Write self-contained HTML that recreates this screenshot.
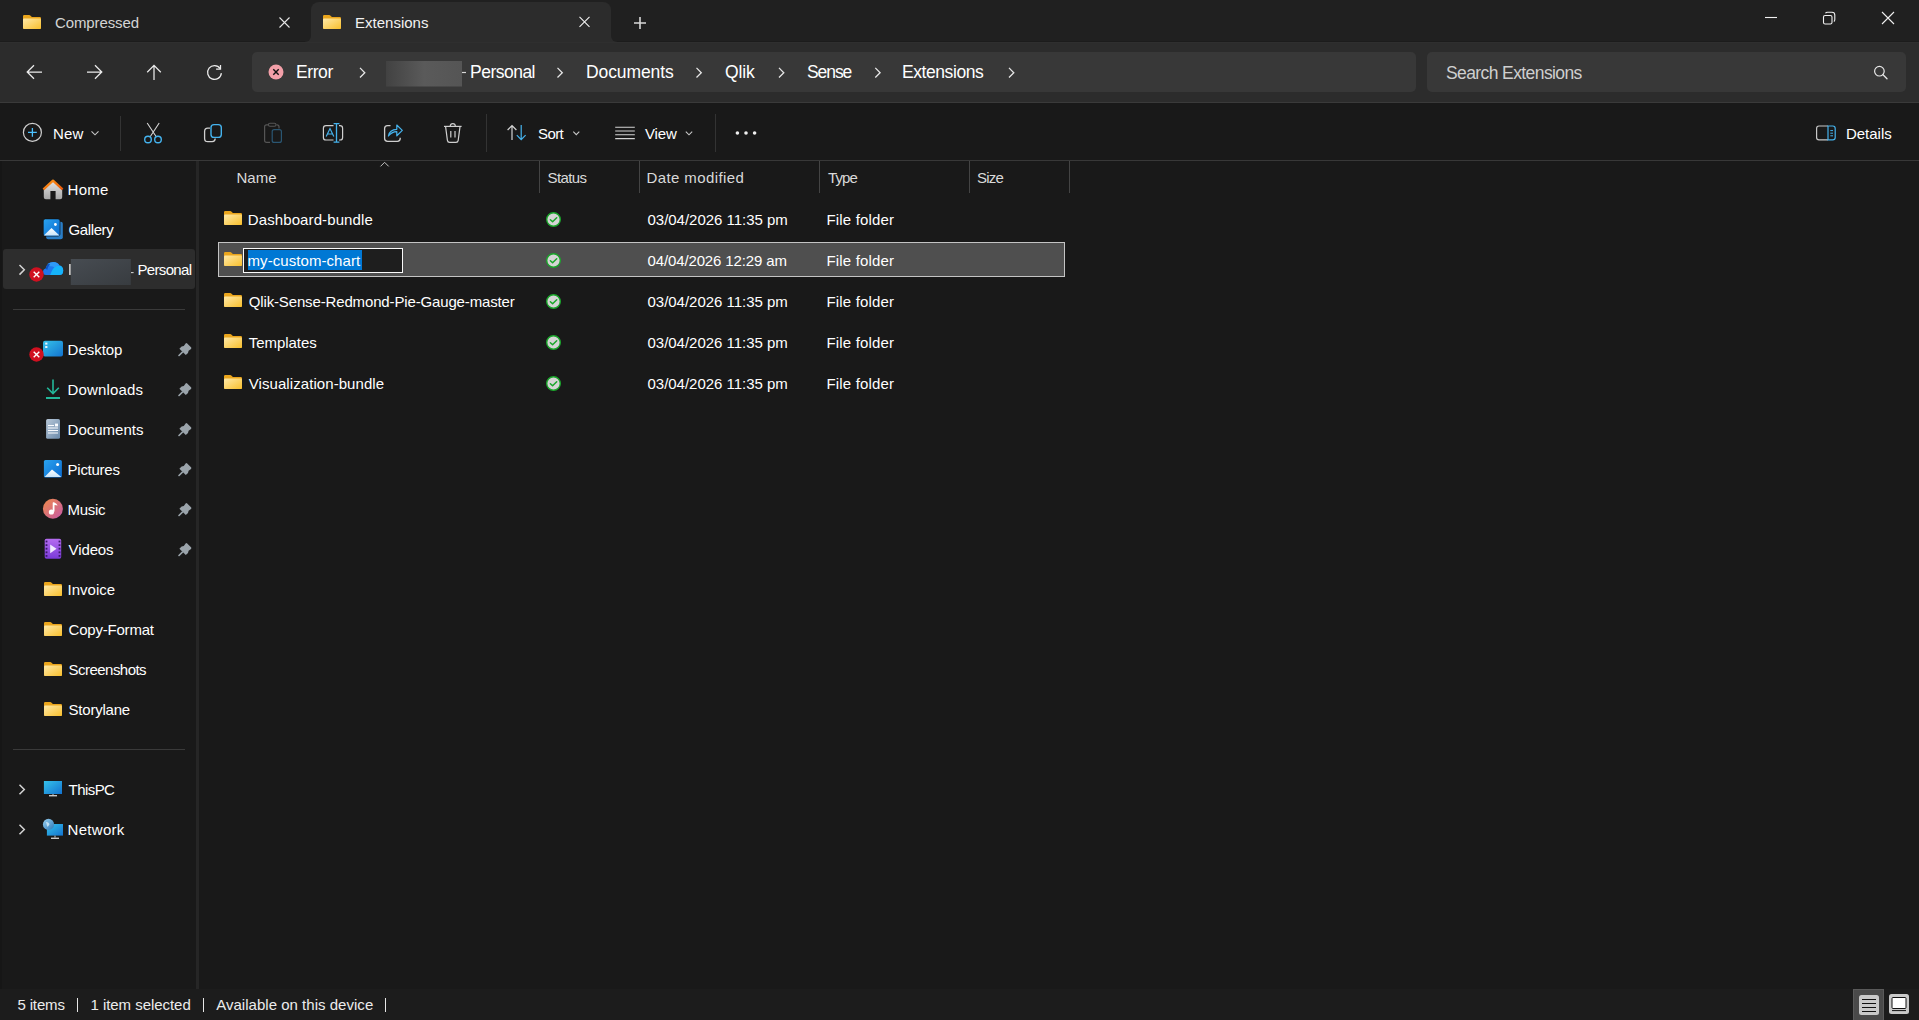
<!DOCTYPE html>
<html><head><meta charset="utf-8">
<style>
*{box-sizing:border-box;margin:0;padding:0}
html,body{width:1919px;height:1020px;overflow:hidden;background:#191919;font-family:"Liberation Sans",sans-serif;color:#fff}
.a{position:absolute}
.t{position:absolute;white-space:pre}
#ic{position:absolute;left:0;top:0;width:1919px;height:1020px}

</style></head><body>
<div class="a" style="left:0;top:0;width:1919px;height:42px;background:#202020"></div>
<div class="a" style="left:0;top:20px;width:1919px;height:83px;background:#2c2c2c"></div>
<div class="a" style="left:0;top:0;width:311px;height:42px;background:#202020;border-bottom-right-radius:6px"></div>
<div class="a" style="left:611px;top:0;width:1308px;height:42px;background:#202020;border-bottom-left-radius:6px"></div>
<div class="a" style="left:311px;top:2px;width:300px;height:30px;background:#2c2c2c;border-radius:8px 8px 0 0"></div>
<div class="a" style="left:0;top:41px;width:305px;height:1px;background:#1c1c1c"></div>
<div class="a" style="left:617px;top:41px;width:1302px;height:1px;background:#1c1c1c"></div>
<div class="a" style="left:0;top:42px;width:1919px;height:1px;background:#2f2f2f"></div>
<div class="a" style="left:252px;top:52px;width:1164px;height:40px;background:#383838;border-radius:5px"></div>
<div class="a" style="left:1427px;top:52px;width:479px;height:40px;background:#383838;border-radius:5px"></div>
<div class="a" style="left:0;top:102px;width:1919px;height:1px;background:#3a3a3a"></div>
<div class="a" style="left:0;top:103px;width:1919px;height:57px;background:#191919"></div>
<div class="a" style="left:0;top:160px;width:1919px;height:1px;background:#383838"></div>
<div class="a" style="left:0;top:161px;width:2px;height:828px;background:#161616"></div>
<div class="a" style="left:196px;top:161px;width:3px;height:828px;background:#262626"></div>
<div class="a" style="left:0;top:989px;width:1919px;height:31px;background:#1c1c1c"></div>
<div class="a" style="left:3px;top:249px;width:192px;height:40px;background:#2d2d2d;border-radius:3px"></div>
<div class="a" style="left:13px;top:309px;width:172px;height:1px;background:#3a3a3a"></div>
<div class="a" style="left:13px;top:749px;width:172px;height:1px;background:#3a3a3a"></div>
<div class="a" style="left:218px;top:242px;width:847px;height:35px;background:#4f4f4f;border:1px solid #c4c4c4"></div>
<div class="a" style="left:243px;top:248px;width:160px;height:25px;background:#1e1e1e;border:1px solid #fafafa"></div>
<div class="a" style="left:248px;top:250px;width:114px;height:20px;background:#0078d4"></div>

<svg id="ic" width="1919" height="1020" viewBox="0 0 1919 1020">
<defs>
<linearGradient id="fg" x1="0" y1="0" x2="1" y2="1"><stop offset="0" stop-color="#ffe9a8"/><stop offset="1" stop-color="#f8bf2c"/></linearGradient>
<symbol id="folder" viewBox="0 0 18 14" overflow="visible">
<path d="M0 1.2 Q0 0 1.2 0 H6.3 Q6.9 0 7.3 0.4 L8.9 2 H16.8 Q18 2 18 3.2 V12.8 Q18 14 16.8 14 H1.2 Q0 14 0 12.8 Z" fill="#eaa51c"/>
<path d="M0 4.6 Q0 3.6 1 3.6 H17 Q18 3.6 18 4.6 V12.8 Q18 14 16.8 14 H1.2 Q0 14 0 12.8 Z" fill="url(#fg)"/>
</symbol>
<symbol id="check" viewBox="0 0 15 15" overflow="visible">
<circle cx="7.5" cy="7.5" r="6.8" fill="#d5d5d5" stroke="#19a62a" stroke-width="1.4"/>
<path d="M4.4 7.7 L6.6 9.8 L10.7 5.8" fill="none" stroke="#19a62a" stroke-width="1.5" stroke-linecap="round" stroke-linejoin="round"/>
</symbol>
<symbol id="pin" viewBox="0 0 14 14" overflow="visible">
<path d="M7.6 1 Q8.4 0.2 9.2 1 L13 4.8 Q13.8 5.6 13 6.4 L10.6 8.2 L10 10.4 L7.8 12.6 L1.4 6.2 L3.6 4 L5.8 3.4 Z" fill="#9ba4ab"/>
<path d="M4.4 9.6 L1 13" stroke="#9ba4ab" stroke-width="1.6" stroke-linecap="round"/>
</symbol>
<symbol id="redx" viewBox="0 0 15 15" overflow="visible">
<circle cx="7.5" cy="7.5" r="7.2" fill="#d01020"/>
<path d="M4.7 4.7 L10.3 10.3 M10.3 4.7 L4.7 10.3" stroke="#fff" stroke-width="1.4"/>
</symbol>
<symbol id="chev" viewBox="0 0 7 11" overflow="visible">
<path d="M1 0.7 L5.8 5.5 L1 10.3" fill="none" stroke="currentColor"/>
</symbol>
<symbol id="fold2" viewBox="0 0 18 14" overflow="visible">
<path d="M0 1.2 Q0 0 1.2 0 H6.3 Q6.9 0 7.3 0.4 L8.9 2 H16.8 Q18 2 18 3.2 V12.8 Q18 14 16.8 14 H1.2 Q0 14 0 12.8 Z" fill="#eaa51c"/>
<path d="M0 4.6 Q0 3.6 1 3.6 H17 Q18 3.6 18 4.6 V12.8 Q18 14 16.8 14 H1.2 Q0 14 0 12.8 Z" fill="url(#fg)"/>
</symbol>
<linearGradient id="blur1" x1="0" y1="0" x2="1" y2="0"><stop offset="0" stop-color="#424242"/><stop offset="0.5" stop-color="#5a5a5a"/><stop offset="1" stop-color="#555"/></linearGradient>
<linearGradient id="blur2" x1="0" y1="0" x2="1" y2="1"><stop offset="0" stop-color="#474c52"/><stop offset="1" stop-color="#383c40"/></linearGradient>
<linearGradient id="home" x1="0" y1="0" x2="0" y2="1"><stop offset="0" stop-color="#e4e4e4"/><stop offset="1" stop-color="#a8a8a8"/></linearGradient>
<linearGradient id="roof" x1="0" y1="0" x2="1" y2="1"><stop offset="0" stop-color="#ff9a1a"/><stop offset="1" stop-color="#e8560a"/></linearGradient>
<linearGradient id="bluepic" x1="0" y1="0" x2="1" y2="1"><stop offset="0" stop-color="#2aa3ef"/><stop offset="1" stop-color="#0a6ad0"/></linearGradient>
<linearGradient id="mount" x1="0" y1="0" x2="0" y2="1"><stop offset="0" stop-color="#ffffff"/><stop offset="1" stop-color="#c8e4fa"/></linearGradient>
<linearGradient id="cloud" x1="0" y1="0" x2="1" y2="1"><stop offset="0" stop-color="#3ac6ff"/><stop offset="1" stop-color="#0c7ae0"/></linearGradient>
<linearGradient id="desk" x1="0" y1="0" x2="1" y2="1"><stop offset="0" stop-color="#35c2ea"/><stop offset="1" stop-color="#1373d0"/></linearGradient>
<linearGradient id="doc" x1="0" y1="0" x2="1" y2="1"><stop offset="0" stop-color="#b8c8d8"/><stop offset="1" stop-color="#6a8aab"/></linearGradient>
<linearGradient id="music" x1="0" y1="0" x2="1" y2="1"><stop offset="0" stop-color="#f08a48"/><stop offset="1" stop-color="#c458a8"/></linearGradient>
<linearGradient id="video" x1="0" y1="0" x2="0" y2="1"><stop offset="0" stop-color="#b56cf0"/><stop offset="1" stop-color="#7a3ad8"/></linearGradient>
<linearGradient id="globe" x1="0" y1="0" x2="1" y2="1"><stop offset="0" stop-color="#9ad0f0"/><stop offset="1" stop-color="#2a78b8"/></linearGradient>
</defs>

<!-- tab strip -->
<use href="#folder" x="23" y="15" width="18" height="14"/>
<use href="#folder" x="323" y="15" width="18" height="14"/>
<path d="M279.5 17.5 L289.5 27.5 M289.5 17.5 L279.5 27.5" stroke="#e6e6e6" stroke-width="1.1"/>
<path d="M579.5 16.8 L589.5 26.8 M589.5 16.8 L579.5 26.8" stroke="#f0f0f0" stroke-width="1.1"/>
<path d="M634 23 H646 M640 17 V29" stroke="#d8d8d8" stroke-width="1.6"/>
<path d="M1765 17.5 H1777" stroke="#f0f0f0" stroke-width="1.1"/>
<rect x="1823.5" y="15.5" width="8.5" height="8.5" rx="1.6" fill="none" stroke="#f0f0f0" stroke-width="1.1"/>
<path d="M1825.5 13.2 Q1826 12.2 1827.5 12.2 H1832 Q1834.8 12.2 1834.8 15 V19.5 Q1834.8 21 1833.8 21.5" fill="none" stroke="#f0f0f0" stroke-width="1.1"/>
<path d="M1882 12 L1894 24 M1894 12 L1882 24" stroke="#f0f0f0" stroke-width="1.1"/>

<!-- nav buttons -->
<g fill="none" stroke="#ececec" stroke-width="1.25" stroke-linejoin="miter">
<path d="M42 72 H27.5 M34 65.2 L27.2 72 L34 78.8"/>
<path d="M87 72 H101.5 M95 65.2 L101.8 72 L95 78.8"/>
<path d="M154 80 V65.5 M147.2 72.2 L154 65.4 L160.8 72.2"/>
<path d="M220.15 68.54 A6.9 6.9 0 1 0 221.37 73.1"/>
<path d="M220.5 64.9 V69.2 H216.1"/>
</g>

<!-- address box -->
<circle cx="276" cy="72" r="7.5" fill="#f3a0a9"/>
<path d="M273.3 69.3 L278.7 74.7 M278.7 69.3 L273.3 74.7" stroke="#111" stroke-width="1.4"/>
<g color="#e6e6e6" stroke-width="1.3">
<use href="#chev" x="359" y="67.2" width="7" height="11"/>
<use href="#chev" x="556.5" y="67.2" width="7" height="11"/>
<use href="#chev" x="695.5" y="67.2" width="7" height="11"/>
<use href="#chev" x="778" y="67.2" width="7" height="11"/>
<use href="#chev" x="874.3" y="67.2" width="7" height="11"/>
<use href="#chev" x="1008" y="67.2" width="7" height="11"/>
</g>
<rect x="386" y="61" width="76" height="25.5" fill="url(#blur1)"/>
<path d="M462 72.5 H466" stroke="#d8d8d8" stroke-width="1.2"/>
<circle cx="1879.4" cy="71.2" r="4.8" fill="none" stroke="#e8e8e8" stroke-width="1.2"/>
<path d="M1883 74.8 L1887 78.8" stroke="#e8e8e8" stroke-width="1.3" stroke-linecap="round"/>

<!-- toolbar -->
<circle cx="32.4" cy="132.4" r="9" fill="none" stroke="#cfcfcf" stroke-width="1.2"/>
<path d="M28 132.4 H36.8 M32.4 128 V136.8" stroke="#4cc2ff" stroke-width="1.3"/>
<path d="M91.5 131.3 L95 134.8 L98.5 131.3" fill="none" stroke="#c8c8c8" stroke-width="1.1"/>
<rect x="120" y="116" width="1" height="35" fill="#333"/>
<!-- cut -->
<path d="M147.2 123 L156.4 137 M159.2 123 L150 137" stroke="#d4d4d4" stroke-width="1.1"/>
<circle cx="148" cy="139.5" r="3.3" fill="none" stroke="#45b3ee" stroke-width="1.4"/>
<circle cx="158" cy="139.5" r="3.3" fill="none" stroke="#45b3ee" stroke-width="1.4"/>
<!-- copy -->
<path d="M210 128.2 H207.8 Q204.6 128.2 204.6 131.4 V138.4 Q204.6 141.6 207.8 141.6 H212.2 Q215.2 141.6 215.2 138.6" fill="none" stroke="#d0d0d0" stroke-width="1.3"/>
<rect x="211" y="124.6" width="10.3" height="12.8" rx="3" fill="none" stroke="#45b3ee" stroke-width="1.4"/>
<!-- paste (disabled) -->
<path d="M268 124.8 H266.6 Q264.6 124.8 264.6 126.8 V140.6 Q264.6 142.4 266.6 142.4 H270" fill="none" stroke="#555" stroke-width="1.2"/>
<path d="M276.5 124.8 H277 Q279 124.8 279 126.8 V128.5" fill="none" stroke="#555" stroke-width="1.2"/>
<rect x="268.4" y="123.2" width="7.6" height="3" rx="1.5" fill="none" stroke="#555" stroke-width="1.1"/>
<rect x="272.2" y="129.6" width="9.2" height="12.8" rx="2" fill="none" stroke="#2a5672" stroke-width="1.2"/>
<!-- rename -->
<path d="M333.5 125.6 H326 Q323.4 125.6 323.4 128.2 V137.4 Q323.4 140 326 140 H333.5" fill="none" stroke="#cfcfcf" stroke-width="1.2"/>
<path d="M339 125.6 H340 Q342.6 125.6 342.6 128.2 V137.4 Q342.6 140 340 140 H339" fill="none" stroke="#cfcfcf" stroke-width="1.2"/>
<path d="M336.5 123.6 V142.2 M333.6 123.6 H339.4 M333.6 142.2 H339.4" stroke="#45b3ee" stroke-width="1.3"/>
<path d="M326.2 136.6 L330 128.6 L333.8 136.6 M327.4 134 H332.6" fill="none" stroke="#45b3ee" stroke-width="1.2"/>
<!-- share -->
<path d="M390.5 125.6 H387.6 Q384.6 125.6 384.6 128.6 V138.6 Q384.6 141.4 387.6 141.4 H397.4 Q400.2 141.4 400.2 138.6 V137.8" fill="none" stroke="#cfcfcf" stroke-width="1.3"/>
<path d="M388.4 136 Q389.5 129.5 396.8 129.3 V125 L402.3 130.4 L396.8 135.8 V131.6 Q391.5 131.8 388.4 136 Z" fill="none" stroke="#45b3ee" stroke-width="1.2" stroke-linejoin="round"/>
<!-- delete -->
<path d="M444 126.4 H461.6" stroke="#cfcfcf" stroke-width="1.2"/>
<path d="M450.2 126.2 Q450.4 123.6 452.8 123.6 Q455.2 123.6 455.4 126.2" fill="none" stroke="#cfcfcf" stroke-width="1.2"/>
<path d="M445.6 126.6 L447.4 140.4 Q447.7 142.4 449.6 142.4 H456 Q457.9 142.4 458.2 140.4 L460 126.6" fill="none" stroke="#cfcfcf" stroke-width="1.2"/>
<path d="M450.8 131 V137.6 M455 131 V137.6" stroke="#cfcfcf" stroke-width="1.2"/>
<rect x="486" y="114" width="1" height="38" fill="#333"/>
<!-- sort -->
<path d="M512 140 V125.6 M507.6 130 L512 125.6 L516.4 130" fill="none" stroke="#d4d4d4" stroke-width="1.2"/>
<path d="M521.2 125 V139.6 M516.8 135.2 L521.2 139.6 L525.6 135.2" fill="none" stroke="#45b3ee" stroke-width="1.2"/>
<path d="M573.3 131.6 L576.3 134.6 L579.3 131.6" fill="none" stroke="#c8c8c8" stroke-width="1.1"/>
<!-- view -->
<path d="M615.2 127.2 H634.8 M615.2 131 H634.8 M615.2 134.8 H634.8 M615.2 138.6 H634.8" stroke="#d4d4d4" stroke-width="1.1"/>
<path d="M685.8 131.6 L689 134.8 L692.2 131.6" fill="none" stroke="#c8c8c8" stroke-width="1.1"/>
<rect x="715" y="114" width="1" height="38" fill="#333"/>
<circle cx="737.4" cy="133" r="1.8" fill="#f0f0f0"/>
<circle cx="746" cy="133" r="1.8" fill="#f0f0f0"/>
<circle cx="754.6" cy="133" r="1.8" fill="#f0f0f0"/>
<!-- details -->
<path d="M1828 126 H1819 Q1816.6 126 1816.6 128.4 V137.4 Q1816.6 139.8 1819 139.8 H1828" fill="none" stroke="#c8c8c8" stroke-width="1.2"/>
<path d="M1828 126 H1832.8 Q1835.2 126 1835.2 128.4 V137.4 Q1835.2 139.8 1832.8 139.8 H1828 Z" fill="none" stroke="#45b3ee" stroke-width="1.2"/>
<path d="M1830.3 130.6 H1833 M1830.3 133.2 H1833 M1830.3 135.8 H1833" stroke="#45b3ee" stroke-width="1"/>

<!-- header -->
<path d="M380.5 166.4 L384.6 162.3 L388.7 166.4" fill="none" stroke="#c4c4c4" stroke-width="1"/>
<g fill="#444">
<rect x="539" y="161" width="1" height="32"/>
<rect x="639" y="161" width="1" height="32"/>
<rect x="819" y="161" width="1" height="32"/>
<rect x="969" y="161" width="1" height="32"/>
<rect x="1069" y="161" width="1" height="32"/>
</g>

<!-- rows -->
<use href="#folder" x="224" y="211" width="18" height="14"/>
<use href="#folder" x="224" y="252" width="18" height="14"/>
<use href="#folder" x="224" y="293" width="18" height="14"/>
<use href="#folder" x="224" y="334" width="18" height="14"/>
<use href="#folder" x="224" y="375" width="18" height="14"/>
<use href="#check" x="546" y="212" width="15" height="15"/>
<use href="#check" x="546" y="253" width="15" height="15"/>
<use href="#check" x="546" y="294" width="15" height="15"/>
<use href="#check" x="546" y="335" width="15" height="15"/>
<use href="#check" x="546" y="376" width="15" height="15"/>

<!-- nav pane -->
<!-- home -->
<path d="M43.8 189.2 L53 181 L62.2 189.2 V197.2 Q62.2 199.2 60.2 199.2 H55.6 V191 H50.4 V199.2 H45.8 Q43.8 199.2 43.8 197.2 Z" fill="url(#home)"/>
<path d="M43.4 189.4 L53 180.6 L62.6 189.4" fill="none" stroke="url(#roof)" stroke-width="2.3" stroke-linejoin="round"/>
<!-- gallery -->
<rect x="46.2" y="221.8" width="16.6" height="17.4" rx="2" fill="#2d8fe6" opacity="0.85"/>
<rect x="43.3" y="218.9" width="16.7" height="17.2" rx="2" fill="url(#bluepic)" stroke="#0d0d0d" stroke-width="0.6"/>
<path d="M43.8 235.6 L51.5 228 L59.5 235.6 Z" fill="url(#mount)"/>
<circle cx="55.4" cy="224.5" r="1.4" fill="#fff"/>
<!-- onedrive row -->
<use href="#chev" x="18.5" y="264.3" width="7" height="11" color="#d4d4d4" style="stroke-width:1.5"/>
<path d="M45.8 275.1 Q43 275.1 43 272.1 Q43 269.2 45.6 268.6 Q47.2 261.9 53.2 261.9 Q57.8 262 59.4 265.6 Q63.2 266.4 63.2 270.6 Q63.2 275.1 59.4 275.1 Z" fill="#1f78ec"/>
<path d="M50.2 275.1 Q52.6 268.4 55.2 266.6 Q57 265.4 59.4 265.6 Q63.2 266.4 63.2 270.6 Q63.2 275.1 59.4 275.1 Z" fill="#16b4fa"/>
<path d="M47.4 264 Q49.6 262.3 53.2 261.9 Q57.8 262 59.4 265.6 Q56.6 265.6 54.6 267.4 Q52.6 266 50 266.2 Z" fill="#2f9af6"/>
<path d="M45.6 268.6 Q46.2 265.4 48.8 263.4 L50 264.6 Q47.8 266.6 47.2 270 Z" fill="#0c52c4"/>
<use href="#redx" x="29" y="267" width="15" height="15"/>
<rect x="70.8" y="259" width="60" height="26" fill="url(#blur2)"/>
<path d="M69.9 264 V275" stroke="#e6e6e6" stroke-width="1.4"/>
<path d="M131 272.6 H133.6" stroke="#cfcfcf" stroke-width="1.1"/>
<!-- desktop -->
<rect x="43" y="340.8" width="20" height="15.7" rx="2" fill="url(#desk)"/>
<rect x="45.2" y="342.6" width="2.2" height="2" fill="#e8f6ff"/>
<rect x="45.2" y="346" width="2.2" height="2" fill="#e8f6ff"/>
<use href="#redx" x="29" y="347" width="15" height="15"/>
<!-- downloads -->
<path d="M53 379.6 V393.4 M47.2 387.8 L53 393.6 L58.8 387.8" fill="none" stroke="#23b89a" stroke-width="1.6"/>
<rect x="46" y="397" width="14" height="2" fill="#23b89a"/>
<!-- documents -->
<rect x="46.1" y="419" width="13.9" height="19.8" rx="1.6" fill="url(#doc)"/>
<path d="M48 425.5 H54 M48 428 H58 M48 430.5 H58 M48 433 H58" stroke="#fafcff" stroke-width="1"/>
<rect x="55" y="423.6" width="3" height="2.8" fill="#fafcff"/>
<!-- pictures -->
<rect x="43.9" y="460" width="18" height="17.6" rx="1.6" fill="url(#bluepic)"/>
<path d="M44.5 477 L52 469.6 L61.4 477 Z" fill="url(#mount)"/>
<circle cx="57.6" cy="464.4" r="1.5" fill="#fff"/>
<!-- music -->
<circle cx="52.9" cy="508.8" r="10" fill="url(#music)"/>
<path d="M53.6 502.6 V511.6" stroke="#fff" stroke-width="1.8"/>
<path d="M53 502.2 Q56.8 503 57.6 505.6 Q55.4 504.8 53.8 505.2 Z" fill="#fff"/>
<circle cx="51.4" cy="512" r="2.6" fill="#fff"/>
<!-- videos -->
<rect x="44.7" y="538.8" width="16.5" height="20" rx="1.8" fill="url(#video)"/>
<g fill="#3b1a6a"><rect x="45.6" y="540.6" width="1.8" height="1.8"/><rect x="45.6" y="544.2" width="1.8" height="1.8"/><rect x="45.6" y="547.8" width="1.8" height="1.8"/><rect x="45.6" y="551.4" width="1.8" height="1.8"/><rect x="45.6" y="555" width="1.8" height="1.8"/>
<rect x="58.6" y="540.6" width="1.8" height="1.8"/><rect x="58.6" y="544.2" width="1.8" height="1.8"/><rect x="58.6" y="547.8" width="1.8" height="1.8"/><rect x="58.6" y="551.4" width="1.8" height="1.8"/><rect x="58.6" y="555" width="1.8" height="1.8"/></g>
<path d="M50.2 544.4 L56.6 548.8 L50.2 553.2 Z" fill="#f0e8ff"/>
<!-- folders -->
<use href="#folder" x="44" y="582" width="18" height="14"/>
<use href="#folder" x="44" y="622" width="18" height="14"/>
<use href="#folder" x="44" y="662" width="18" height="14"/>
<use href="#folder" x="44" y="702" width="18" height="14"/>
<!-- pins -->
<use href="#pin" x="178" y="342.5" width="14" height="14"/>
<use href="#pin" x="178" y="382.5" width="14" height="14"/>
<use href="#pin" x="178" y="422.5" width="14" height="14"/>
<use href="#pin" x="178" y="462.5" width="14" height="14"/>
<use href="#pin" x="178" y="502.5" width="14" height="14"/>
<use href="#pin" x="178" y="542.5" width="14" height="14"/>
<!-- this pc -->
<use href="#chev" x="18.5" y="784" width="7" height="11" color="#d4d4d4" style="stroke-width:1.5"/>
<rect x="43.9" y="781" width="18.1" height="13" fill="url(#desk)"/>
<rect x="49" y="795" width="8" height="1.4" fill="#c8c8c8"/>
<rect x="52.5" y="794" width="1" height="1.5" fill="#c8c8c8"/>
<!-- network -->
<use href="#chev" x="18.5" y="824" width="7" height="11" color="#d4d4d4" style="stroke-width:1.5"/>
<rect x="46.9" y="824" width="16.1" height="11.6" fill="url(#desk)"/>
<rect x="51" y="837.6" width="8" height="1.4" fill="#c8c8c8"/>
<rect x="54.5" y="835.6" width="1" height="2" fill="#c8c8c8"/>
<circle cx="48.5" cy="824.4" r="5.6" fill="url(#globe)"/>
<path d="M46 822 Q48 821.5 49.6 824 Q48.5 826.5 47.2 826.8" fill="#d8ecf8" opacity="0.8"/>

<!-- status bar -->
<g fill="#e6e6e6"><rect x="77" y="998" width="1" height="14"/><rect x="203" y="998" width="1" height="14"/><rect x="385" y="998" width="1" height="14"/></g>
<rect x="1853.5" y="989.5" width="30" height="31" fill="#4a4a4a" stroke="#5a5a5a" stroke-width="1"/>
<rect x="1859" y="995" width="20" height="20" rx="2.5" fill="#c9c9c9"/>
<path d="M1862 999.5 H1876 M1862 1003.5 H1876 M1862 1007.5 H1876 M1862 1011.5 H1876" stroke="#111" stroke-width="1.1"/>
<rect x="1889" y="994" width="20" height="20" rx="2.5" fill="#c9c9c9"/>
<rect x="1892" y="997.5" width="14" height="11" rx="1" fill="#fff" stroke="#111" stroke-width="1"/>
<path d="M1892 1010.6 H1906" stroke="#111" stroke-width="1"/>
</svg>

<div class="t" style="left:55px;top:13px;font-size:15px;line-height:20px;letter-spacing:-0.11px;word-spacing:0px;color:#d4d4d4">Compressed</div>
<div class="t" style="left:355px;top:13px;font-size:15px;line-height:20px;letter-spacing:0.01px;word-spacing:0px;color:#f2f2f2">Extensions</div>
<div class="t" style="left:296px;top:61px;font-size:17.5px;line-height:22px;letter-spacing:-0.415px;word-spacing:0px;color:#fff">Error</div>
<div class="t" style="left:470px;top:61px;font-size:17.5px;line-height:22px;letter-spacing:-0.512px;word-spacing:0px;color:#fff">Personal</div>
<div class="t" style="left:586px;top:61px;font-size:17.5px;line-height:22px;letter-spacing:-0.095px;word-spacing:0px;color:#fff">Documents</div>
<div class="t" style="left:725px;top:61px;font-size:17.5px;line-height:22px;letter-spacing:-0.129px;word-spacing:0px;color:#fff">Qlik</div>
<div class="t" style="left:807px;top:61px;font-size:17.5px;line-height:22px;letter-spacing:-1.07px;word-spacing:0px;color:#fff">Sense</div>
<div class="t" style="left:902px;top:61px;font-size:17.5px;line-height:22px;letter-spacing:-0.428px;word-spacing:0px;color:#fff">Extensions</div>
<div class="t" style="left:1446px;top:62px;font-size:17.5px;line-height:22px;letter-spacing:-0.598px;word-spacing:0px;color:#cfcfcf">Search Extensions</div>
<div class="t" style="left:53px;top:124px;font-size:15px;line-height:20px;letter-spacing:0.11px;word-spacing:0px;color:#fff">New</div>
<div class="t" style="left:538px;top:124px;font-size:15px;line-height:20px;letter-spacing:-0.58px;word-spacing:0px;color:#fff">Sort</div>
<div class="t" style="left:645px;top:124px;font-size:15px;line-height:20px;letter-spacing:-0.136px;word-spacing:0px;color:#fff">View</div>
<div class="t" style="left:1846px;top:124px;font-size:15px;line-height:20px;letter-spacing:-0.025px;word-spacing:0px;color:#fff">Details</div>
<div class="t" style="left:236.5px;top:167.5px;font-size:15px;line-height:20px;letter-spacing:0px;word-spacing:0px;color:#dadada">Name</div>
<div class="t" style="left:547.5px;top:167.5px;font-size:15px;line-height:20px;letter-spacing:-0.6px;word-spacing:0px;color:#dadada">Status</div>
<div class="t" style="left:646.5px;top:167.5px;font-size:15px;line-height:20px;letter-spacing:0.4px;word-spacing:0px;color:#dadada">Date modified</div>
<div class="t" style="left:828px;top:167.5px;font-size:15px;line-height:20px;letter-spacing:-0.89px;word-spacing:0px;color:#dadada">Type</div>
<div class="t" style="left:977px;top:167.5px;font-size:15px;line-height:20px;letter-spacing:-0.81px;word-spacing:0px;color:#dadada">Size</div>
<div class="t" style="left:247.75px;top:210px;font-size:15px;line-height:20px;letter-spacing:0.108px;word-spacing:0px;color:#fff">Dashboard-bundle</div>
<div class="t" style="left:647.5px;top:210px;font-size:15px;line-height:20px;letter-spacing:-0.021px;word-spacing:0px;color:#fff">03/04/2026 11:35 pm</div>
<div class="t" style="left:826.5px;top:210px;font-size:15px;line-height:20px;letter-spacing:0.164px;word-spacing:0px;color:#fff">File folder</div>
<div class="t" style="left:647.5px;top:251px;font-size:15px;line-height:20px;letter-spacing:-0.127px;word-spacing:0px;color:#fff">04/04/2026 12:29 am</div>
<div class="t" style="left:826.5px;top:251px;font-size:15px;line-height:20px;letter-spacing:0.164px;word-spacing:0px;color:#fff">File folder</div>
<div class="t" style="left:248.75px;top:292px;font-size:15px;line-height:20px;letter-spacing:-0.145px;word-spacing:0px;color:#fff">Qlik-Sense-Redmond-Pie-Gauge-master</div>
<div class="t" style="left:647.5px;top:292px;font-size:15px;line-height:20px;letter-spacing:-0.021px;word-spacing:0px;color:#fff">03/04/2026 11:35 pm</div>
<div class="t" style="left:826.5px;top:292px;font-size:15px;line-height:20px;letter-spacing:0.164px;word-spacing:0px;color:#fff">File folder</div>
<div class="t" style="left:248.75px;top:333px;font-size:15px;line-height:20px;letter-spacing:-0.046px;word-spacing:0px;color:#fff">Templates</div>
<div class="t" style="left:647.5px;top:333px;font-size:15px;line-height:20px;letter-spacing:-0.021px;word-spacing:0px;color:#fff">03/04/2026 11:35 pm</div>
<div class="t" style="left:826.5px;top:333px;font-size:15px;line-height:20px;letter-spacing:0.164px;word-spacing:0px;color:#fff">File folder</div>
<div class="t" style="left:248.75px;top:374px;font-size:15px;line-height:20px;letter-spacing:0.072px;word-spacing:0px;color:#fff">Visualization-bundle</div>
<div class="t" style="left:647.5px;top:374px;font-size:15px;line-height:20px;letter-spacing:-0.021px;word-spacing:0px;color:#fff">03/04/2026 11:35 pm</div>
<div class="t" style="left:826.5px;top:374px;font-size:15px;line-height:20px;letter-spacing:0.164px;word-spacing:0px;color:#fff">File folder</div>
<div class="t" style="left:247.5px;top:251px;font-size:15px;line-height:20px;letter-spacing:0.071px;word-spacing:0px;color:#fff">my-custom-chart</div>
<div class="t" style="left:67.6px;top:180px;font-size:15px;line-height:20px;letter-spacing:0.277px;word-spacing:0px;color:#fff">Home</div>
<div class="t" style="left:68.6px;top:220px;font-size:15px;line-height:20px;letter-spacing:-0.402px;word-spacing:0px;color:#fff">Gallery</div>
<div class="t" style="left:67.6px;top:340px;font-size:15px;line-height:20px;letter-spacing:-0.031px;word-spacing:0px;color:#fff">Desktop</div>
<div class="t" style="left:67.6px;top:380px;font-size:15px;line-height:20px;letter-spacing:0.161px;word-spacing:0px;color:#fff">Downloads</div>
<div class="t" style="left:67.6px;top:420px;font-size:15px;line-height:20px;letter-spacing:-0.008px;word-spacing:0px;color:#fff">Documents</div>
<div class="t" style="left:67.6px;top:460px;font-size:15px;line-height:20px;letter-spacing:-0.269px;word-spacing:0px;color:#fff">Pictures</div>
<div class="t" style="left:67.6px;top:500px;font-size:15px;line-height:20px;letter-spacing:-0.342px;word-spacing:0px;color:#fff">Music</div>
<div class="t" style="left:68.6px;top:540px;font-size:15px;line-height:20px;letter-spacing:-0.119px;word-spacing:0px;color:#fff">Videos</div>
<div class="t" style="left:67.6px;top:580px;font-size:15px;line-height:20px;letter-spacing:-0.014px;word-spacing:0px;color:#fff">Invoice</div>
<div class="t" style="left:68.6px;top:620px;font-size:15px;line-height:20px;letter-spacing:-0.215px;word-spacing:0px;color:#fff">Copy-Format</div>
<div class="t" style="left:68.6px;top:660px;font-size:15px;line-height:20px;letter-spacing:-0.538px;word-spacing:0px;color:#fff">Screenshots</div>
<div class="t" style="left:68.6px;top:700px;font-size:15px;line-height:20px;letter-spacing:-0.228px;word-spacing:0px;color:#fff">Storylane</div>
<div class="t" style="left:68.6px;top:780px;font-size:15px;line-height:20px;letter-spacing:-0.6px;word-spacing:-3.4px;color:#fff">This PC</div>
<div class="t" style="left:67.6px;top:820px;font-size:15px;line-height:20px;letter-spacing:0.281px;word-spacing:0px;color:#fff">Network</div>
<div class="t" style="left:137.5px;top:260px;font-size:15px;line-height:20px;letter-spacing:-0.667px;word-spacing:0px;color:#fff">Personal</div>
<div class="t" style="left:17.5px;top:995px;font-size:15px;line-height:20px;letter-spacing:-0.158px;word-spacing:0px;color:#ececec">5 items</div>
<div class="t" style="left:90.5px;top:995px;font-size:15px;line-height:20px;letter-spacing:-0.046px;word-spacing:0px;color:#ececec">1 item selected</div>
<div class="t" style="left:216.2px;top:995px;font-size:15px;line-height:20px;letter-spacing:0.024px;word-spacing:0px;color:#ececec">Available on this device</div>
</body></html>
